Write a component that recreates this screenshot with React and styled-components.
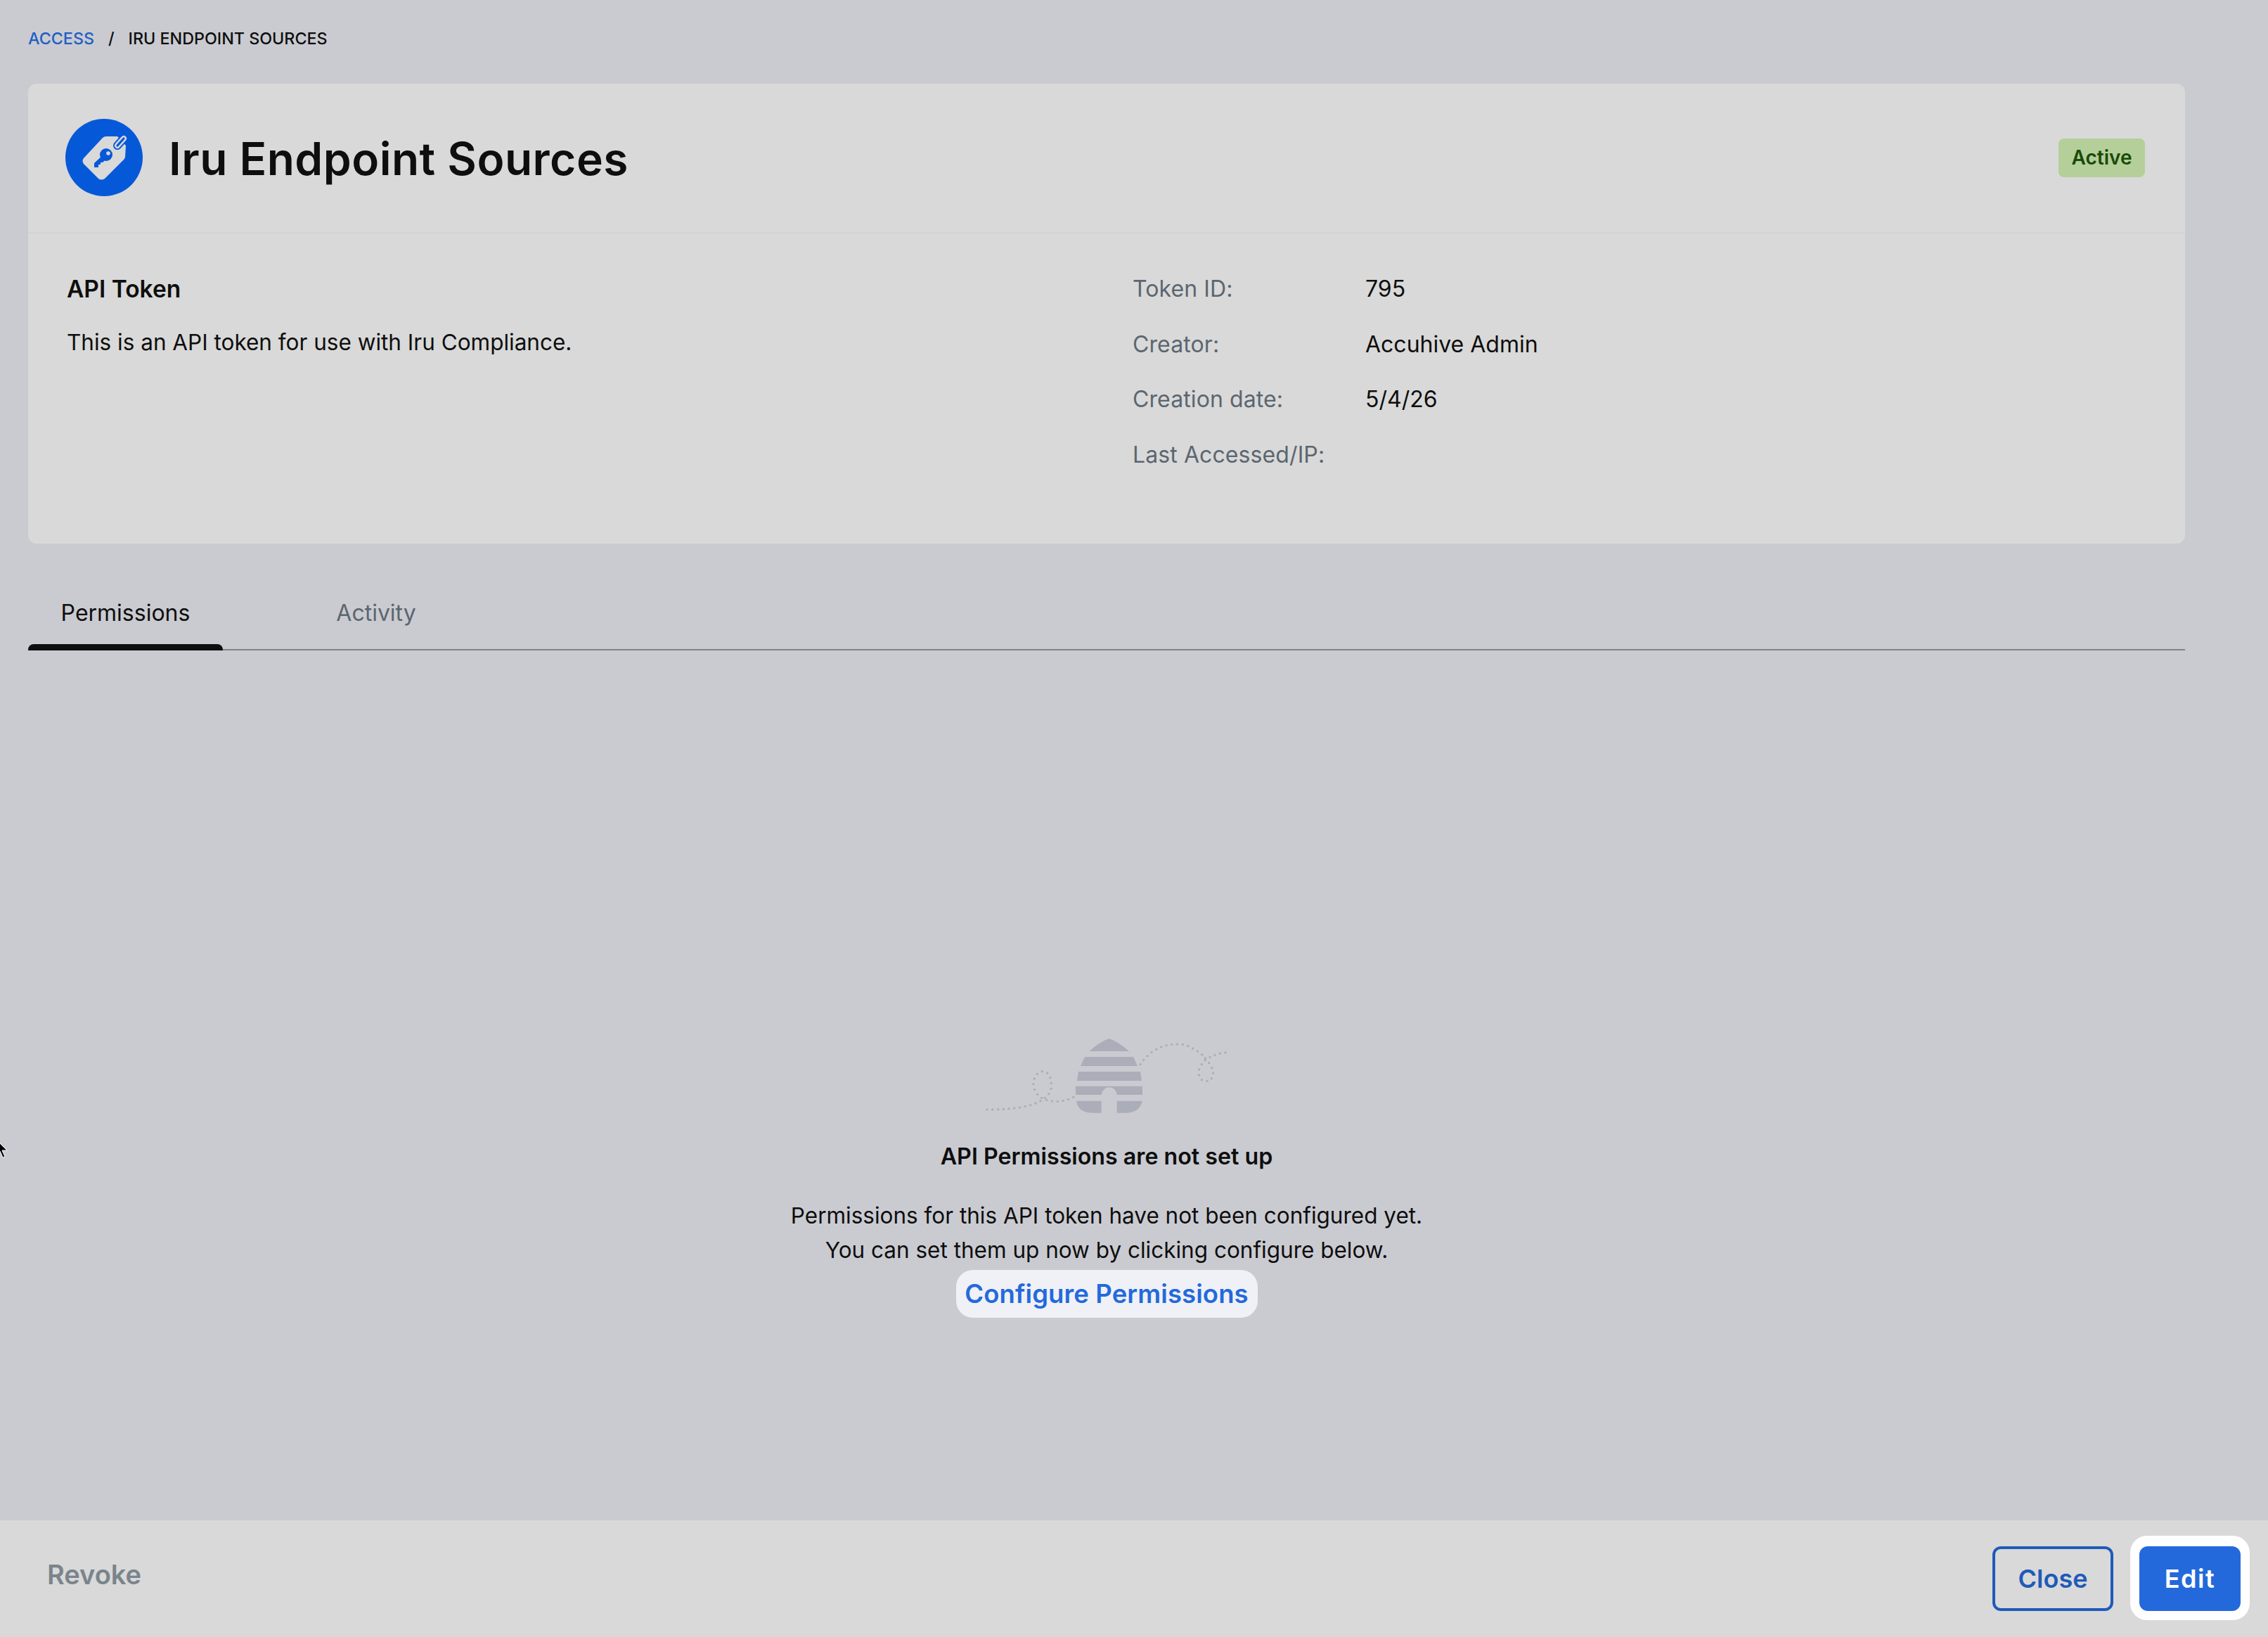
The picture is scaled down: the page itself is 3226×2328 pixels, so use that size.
import React from "react";
import styled, { createGlobalStyle } from "styled-components";

const GlobalStyle = createGlobalStyle`
  html, body {
    margin: 0;
    padding: 0;
    background: #cacbd1;
  }
  body {
    font-family: Inter, "Liberation Sans", sans-serif;
    color: #0e0e0e;
  }
`;

const Page = styled.div`
  position: relative;
  display: flex;
  flex-direction: column;
  width: 3226px;
  height: 2328px;
  overflow: hidden;
  background: #cacbd1;
`;

const Main = styled.main`
  flex: 1;
  display: flex;
  flex-direction: column;
  padding: 0 118px 0 40px;
`;

const Breadcrumb = styled.nav`
  display: flex;
  align-items: center;
  height: 119px;
  padding-bottom: 11px;
  box-sizing: border-box;
  font-size: 23.3px;
  font-weight: 500;
`;

const Crumb = styled.span`
  color: ${(p) => (p.$link ? "#1f5fc4" : "#0e0e0e")};
`;

const Slash = styled.span`
  margin: 0 20px;
`;

const Card = styled.section`
  height: 654px;
  background: #d9d9d9;
  border-radius: 12px;
`;

const CardHeader = styled.header`
  display: flex;
  align-items: center;
  justify-content: space-between;
  height: 213px;
  padding: 0 57px 1px 53px;
  box-sizing: border-box;
  border-bottom: 2px solid #d3d3d3;
`;

const TitleGroup = styled.div`
  display: flex;
  align-items: center;
  gap: 37px;
`;

const Title = styled.h1`
  margin: 3px 0 0;
  font-size: 64px;
  font-weight: 600;
  line-height: 1;
  letter-spacing: 0.5px;
`;

const Badge = styled.span`
  display: flex;
  align-items: center;
  justify-content: center;
  width: 123px;
  height: 55px;
  border-radius: 8px;
  background: #b4cf9a;
  color: #1a4a08;
  font-size: 28px;
  font-weight: 600;
`;

const CardBody = styled.div`
  display: grid;
  grid-template-columns: 1516px 1fr;
  padding: 59px 0 0 55px;
`;

const Kind = styled.h2`
  margin: 0 0 36px;
  font-size: 33.5px;
  font-weight: 600;
  line-height: 40px;
`;

const Description = styled.p`
  margin: 0;
  font-size: 31.5px;
  line-height: 40px;
`;

const Facts = styled.dl`
  display: grid;
  grid-template-columns: 331px 1fr;
  grid-auto-rows: 78.5px;
  margin: 0;
`;

const Label = styled.dt`
  color: #5b6670;
  font-size: 32px;
  letter-spacing: 0.1px;
  line-height: 40px;
`;

const Value = styled.dd`
  margin: 0;
  font-size: 32px;
  line-height: 40px;
`;

const Tabs = styled.div`
  display: flex;
  height: 152px;
  box-sizing: border-box;
  border-bottom: 2px solid #7b858d;
`;

const Tab = styled.div`
  position: relative;
  display: flex;
  align-items: center;
  justify-content: center;
  width: ${(p) => p.$width}px;
  padding-top: 47px;
  box-sizing: border-box;
  font-size: 32px;
  color: ${(p) => (p.$active ? "#0e0e0e" : "#5b6670")};

  ${(p) =>
    p.$active &&
    `
    &::after {
      content: "";
      position: absolute;
      left: 0;
      right: 0;
      bottom: -2px;
      height: 9px;
      background: #0e0e0e;
      border-radius: 8px 8px 0 0;
    }
  `}
`;

const Empty = styled.div`
  display: flex;
  flex-direction: column;
  align-items: center;
  padding-top: 545px;
`;

const Hive = styled.svg`
  display: block;
  width: 346px;
  height: 120px;
`;

const EmptyTitle = styled.h3`
  margin: 35px 0 39px;
  font-size: 32.2px;
  font-weight: 600;
  line-height: 40px;
`;

const EmptyText = styled.p`
  margin: 0;
  font-size: 31.5px;
  line-height: 49px;
  text-align: center;
`;

const LinkButton = styled.button`
  display: block;
  width: 429px;
  height: 68px;
  margin-top: 4px;
  padding: 0;
  border: 0;
  border-radius: 24px;
  background: #eff1f6;
  color: #2469db;
  font-family: inherit;
  font-size: 36.5px;
  font-weight: 600;
  letter-spacing: 0.1px;
`;

const Footer = styled.footer`
  display: flex;
  align-items: center;
  justify-content: space-between;
  height: 166px;
  padding: 0 26px 0 67px;
  box-sizing: border-box;
  background: #d9d9d9;
`;

const Revoke = styled.span`
  margin-top: -12px;
  color: #7a848c;
  font-size: 38px;
  font-weight: 600;
`;

const Actions = styled.div`
  display: flex;
  align-items: flex-start;
  gap: 24px;
  margin-top: -2px;
`;

const Button = styled.button`
  width: ${(p) => p.$width}px;
  height: 92px;
  padding: 0;
  box-sizing: border-box;
  border: 4px solid #1f5ab8;
  border-radius: 12px;
  background: transparent;
  color: #1f5ab8;
  font-family: inherit;
  font-size: 36px;
  font-weight: 600;
`;

const CloseButton = styled(Button)`
  margin-top: 15px;
`;

const EditButton = styled(Button)`
  display: block;
  border-color: #2469db;
  background: #2469db;
  color: #ffffff;
  letter-spacing: 1.5px;
`;

const FocusRing = styled.div`
  padding: 15px 13px 13px;
  border-radius: 24px;
  background: #ffffff;
`;

const Cursor = styled.svg`
  position: absolute;
  left: -6px;
  top: 1620px;
  width: 18px;
  height: 28px;
`;

const leftDots = [
  [159, 384], [182, 384], [206, 383], [229, 382], [252, 380], [275, 378], [298, 375],
  [321, 370], [344, 365], [366, 357], [387, 347], [392, 334], [374, 319], [361, 298],
  [357, 275], [361, 252], [373, 232], [394, 221], [416, 228], [429, 248], [433, 271],
  [432, 295], [422, 317], [406, 334], [413, 343], [436, 348], [460, 349], [483, 346],
  [505, 340], [527, 331],
];

const rightDots = [
  [813, 191], [827, 172], [843, 155], [861, 139], [881, 127], [902, 117], [924, 110],
  [947, 106], [970, 105], [994, 106], [1016, 113], [1037, 123], [1057, 135], [1076, 149],
  [1090, 165], [1106, 185], [1118, 206], [1124, 228], [1117, 251], [1098, 262], [1075, 257],
  [1063, 237], [1064, 213], [1075, 191], [1090, 173], [1110, 160], [1131, 151], [1153, 144],
  [1176, 141],
];

function TokenIcon() {
  return (
    <svg width="110" height="110" viewBox="0 0 110 110">
      <circle cx="55" cy="55" r="55" fill="#0559d9" />
      <path
        d="M53 27Q55 25 58 25L74 25L86 38L85 54Q85 56 83 58L56 85Q51 88 47 85L26 64Q23 60 26 56Z"
        fill="#d9d9d9"
      />
      <path d="M74 38L83 28" stroke="#0559d9" strokeWidth="12" strokeLinecap="round" />
      <path d="M74 38L83 28" stroke="#d9d9d9" strokeWidth="8" strokeLinecap="round" />
      <path d="M74 38L83 28" stroke="#0559d9" strokeWidth="3.2" strokeLinecap="round" />
      <circle cx="58" cy="51" r="9" fill="#0559d9" />
      <path d="M55 50L60 55L53 62H50V65H47V69H41L41 63Z" fill="#0559d9" />
      <circle cx="61" cy="49" r="2.8" fill="#d9d9d9" />
    </svg>
  );
}

function HiveArt() {
  return (
    <Hive viewBox="50 20 346 120">
      {[...leftDots, ...rightDots].map(([x, y]) => (
        <circle key={`${x}-${y}`} cx={x / 3} cy={y / 3} r="1.7" fill="#abadb9" />
      ))}
      <g fill="#abadb9">
        <path d="M198.5 45C208 36 218 30 226.7 27C235 30 245 36 255 45Z" />
        <path d="M192 53H261L267 66H186Z" />
        <path d="M183 74H271L273 87H181Z" />
        <path d="M179 94.7H274L274 107H237.5A10.7 10.7 0 0 0 216 107H179Z" />
        <path d="M180 115.7H215.7V132.7H205C190 132.7 182 128 180 115.7Z" />
        <path d="M237.7 115.7H273.7C271 128 263 132.7 248 132.7H237.7Z" />
      </g>
    </Hive>
  );
}

export default function App() {
  return (
    <Page>
      <GlobalStyle />
      <Main>
        <Breadcrumb>
          <Crumb $link>ACCESS</Crumb>
          <Slash>/</Slash>
          <Crumb>IRU ENDPOINT SOURCES</Crumb>
        </Breadcrumb>
        <Card>
          <CardHeader>
            <TitleGroup>
              <TokenIcon />
              <Title>Iru Endpoint Sources</Title>
            </TitleGroup>
            <Badge>Active</Badge>
          </CardHeader>
          <CardBody>
            <div>
              <Kind>API Token</Kind>
              <Description>This is an API token for use with Iru Compliance.</Description>
            </div>
            <Facts>
              <Label>Token ID:</Label>
              <Value>795</Value>
              <Label>Creator:</Label>
              <Value>Accuhive Admin</Value>
              <Label>Creation date:</Label>
              <Value>5/4/26</Value>
              <Label>Last Accessed/IP:</Label>
              <Value />
            </Facts>
          </CardBody>
        </Card>
        <Tabs>
          <Tab $active $width={277}>Permissions</Tab>
          <Tab $width={436}>Activity</Tab>
        </Tabs>
        <Empty>
          <HiveArt />
          <EmptyTitle>API Permissions are not set up</EmptyTitle>
          <EmptyText>
            Permissions for this API token have not been configured yet.
            <br />
            You can set them up now by clicking configure below.
          </EmptyText>
          <LinkButton>Configure Permissions</LinkButton>
        </Empty>
      </Main>
      <Footer>
        <Revoke>Revoke</Revoke>
        <Actions>
          <CloseButton $width={172}>Close</CloseButton>
          <FocusRing>
            <EditButton $width={144}>Edit</EditButton>
          </FocusRing>
        </Actions>
      </Footer>
      <Cursor viewBox="0 0 18 28">
        <path d="M1 1V22L6 17L10 26L13 25L9 16H16Z" fill="#000" stroke="#fff" strokeWidth="1" />
      </Cursor>
    </Page>
  );
}
